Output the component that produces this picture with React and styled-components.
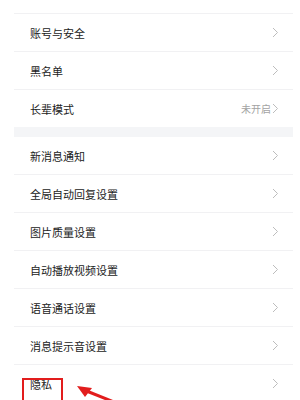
import React from "react";
import styled, { createGlobalStyle } from "styled-components";

const GlobalStyle = createGlobalStyle`
  html, body {
    margin: 0;
    padding: 0;
    background: #ffffff;
    overflow: hidden;
  }
  body {
    font-family: "Noto Sans CJK SC", "Noto Sans", sans-serif;
  }
`;

const Page = styled.div`
  position: relative;
  width: 300px;
  height: 400px;
  overflow: hidden;
  background: #fff;
`;

const List = styled.div`
  margin: -24px 7px 0 14px;
  display: flex;
  flex-direction: column;
`;

const Group = styled.div`
  display: flex;
  flex-direction: column;
  background: #fff;
`;

const Gap = styled.div`
  height: 10px;
  background: #f4f5f7;
`;

const Row = styled.div`
  position: relative;
  height: 37px;
  box-sizing: border-box;
  display: flex;
  align-items: center;
  padding: 0 14px ${(p) => (p.raised ? "6px" : "0")} 16px;
  border-bottom: ${(p) => (p.last ? "none" : "1px solid #f1f1f3")};
  height: ${(p) => (p.last ? "37px" : "38px")};
`;

const Label = styled.span`
  flex: 1;
  font-size: 11px;
  color: #222;
`;

const Value = styled.span`
  font-size: 10px;
  color: #a3a3a3;
  margin-right: 1px;
`;

const Dot = styled.span`
  width: 14px;
  height: 6px;
  border-radius: 3px;
  background: #f2d37a;
  margin-right: 8px;
`;

const Highlight = styled.div`
  position: absolute;
  left: 22px;
  top: 378px;
  width: 41px;
  height: 30px;
  border: 2px solid #e21d1d;
  box-sizing: border-box;
`;

const Arrow = styled.svg`
  position: absolute;
  left: 70px;
  top: 380px;
`;

function Chevron() {
  return (
    <svg width="7" height="11" viewBox="0 0 7 11">
      <path d="M1 1 L5.5 5.5 L1 10" fill="none" stroke="#bdbdbd" strokeWidth="1" />
    </svg>
  );
}

const groupA = [
  { label: "个人信息", dot: true, raised: true },
  { label: "账号与安全" },
  { label: "黑名单" },
  { label: "长辈模式", value: "未开启" },
];

const groupB = [
  "新消息通知",
  "全局自动回复设置",
  "图片质量设置",
  "自动播放视频设置",
  "语音通话设置",
  "消息提示音设置",
  "隐私",
];

export default function App() {
  return (
    <Page>
      <GlobalStyle />
      <List>
        <Group>
          {groupA.map((item, i) => (
            <Row key={item.label} raised={item.raised} last={i === groupA.length - 1}>
              <Label>{item.label}</Label>
              {item.dot && <Dot />}
              {item.value && <Value>{item.value}</Value>}
              <Chevron />
            </Row>
          ))}
        </Group>
        <Gap />
        <Group>
          {groupB.map((label, i) => (
            <Row key={label} last={i === groupB.length - 1}>
              <Label>{label}</Label>
              <Chevron />
            </Row>
          ))}
        </Group>
      </List>
      <Highlight />
      <Arrow width="50" height="22" viewBox="0 0 50 22">
        <line x1="14" y1="10" x2="44" y2="22" stroke="#e21d1d" strokeWidth="3" />
        <polygon points="7,6 22,8 15,17" fill="#e21d1d" />
      </Arrow>
    </Page>
  );
}
